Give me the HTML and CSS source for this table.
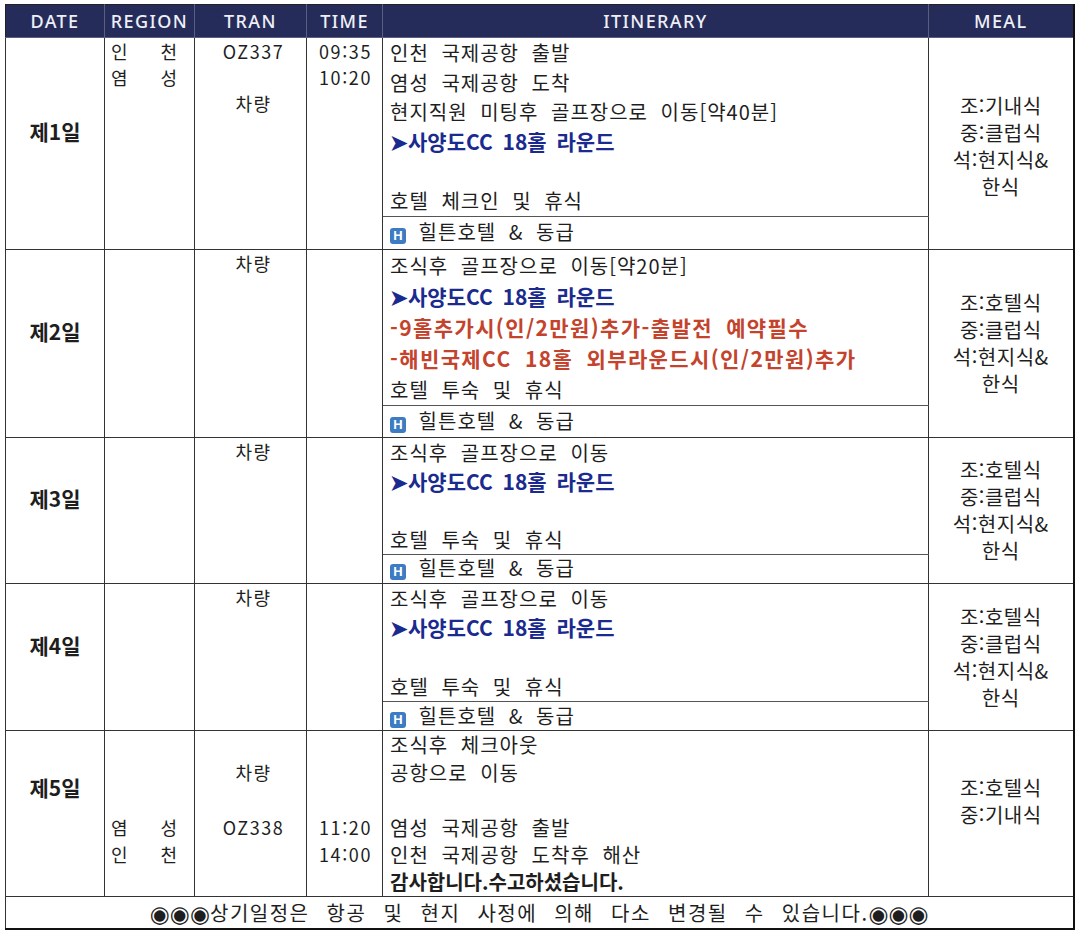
FILE: index.html
```html
<!DOCTYPE html>
<html lang="ko">
<head>
<meta charset="utf-8">
<title>일정표</title>
<link rel="stylesheet" href="styles.css">
</head>
<body>
<table class="sched">
  <colgroup>
    <col class="c-date"><col class="c-region"><col class="c-tran"><col class="c-time"><col class="c-itin"><col class="c-meal">
  </colgroup>
  <thead>
    <tr><th>DATE</th><th>REGION</th><th>TRAN</th><th>TIME</th><th>ITINERARY</th><th>MEAL</th></tr>
  </thead>
  <tbody>
    <tr>
      <td class="day" rowspan="2">제1일</td>
      <td class="region l26" rowspan="2"><div class="pair"><span>인</span><span>천</span></div><div class="pair"><span>염</span><span>성</span></div></td>
      <td class="tran l26" rowspan="2">OZ337<br><br>차량</td>
      <td class="time l26" rowspan="2">09:35<br>10:20</td>
      <td class="itin d1">
        <div>인천 국제공항 출발</div>
        <div>염성 국제공항 도착</div>
        <div>현지직원 미팅후 골프장으로 이동[약40분]</div>
        <div class="blue">➤사양도CC 18홀 라운드</div>
        <div>&nbsp;</div>
        <div>호텔 체크인 및 휴식</div>
      </td>
      <td class="meal m1" rowspan="2">조:기내식<br>중:클럽식<br>석:현지식&amp;<br>한식</td>
    </tr>
    <tr><td class="hotel h1"><span class="hico">H</span> 힐튼호텔 &amp; 동급</td></tr>

    <tr>
      <td class="day" rowspan="2">제2일</td>
      <td class="region" rowspan="2"></td>
      <td class="tran l26" rowspan="2">차량</td>
      <td class="time" rowspan="2"></td>
      <td class="itin d2">
        <div>조식후 골프장으로 이동[약20분]</div>
        <div class="blue">➤사양도CC 18홀 라운드</div>
        <div class="red">-9홀추가시(인/2만원)추가-출발전 예약필수</div>
        <div class="red">-해빈국제CC 18홀 외부라운드시(인/2만원)추가</div>
        <div>호텔 투숙 및 휴식</div>
      </td>
      <td class="meal" rowspan="2">조:호텔식<br>중:클럽식<br>석:현지식&amp;<br>한식</td>
    </tr>
    <tr><td class="hotel h2"><span class="hico">H</span> 힐튼호텔 &amp; 동급</td></tr>

    <tr>
      <td class="day" rowspan="2">제3일</td>
      <td class="region" rowspan="2"></td>
      <td class="tran l26" rowspan="2">차량</td>
      <td class="time" rowspan="2"></td>
      <td class="itin d3">
        <div>조식후 골프장으로 이동</div>
        <div class="blue">➤사양도CC 18홀 라운드</div>
        <div>&nbsp;</div>
        <div>호텔 투숙 및 휴식</div>
      </td>
      <td class="meal" rowspan="2">조:호텔식<br>중:클럽식<br>석:현지식&amp;<br>한식</td>
    </tr>
    <tr><td class="hotel h3"><span class="hico">H</span> 힐튼호텔 &amp; 동급</td></tr>

    <tr>
      <td class="day" rowspan="2">제4일</td>
      <td class="region" rowspan="2"></td>
      <td class="tran l26" rowspan="2">차량</td>
      <td class="time" rowspan="2"></td>
      <td class="itin d4">
        <div>조식후 골프장으로 이동</div>
        <div class="blue">➤사양도CC 18홀 라운드</div>
        <div>&nbsp;</div>
        <div>호텔 투숙 및 휴식</div>
      </td>
      <td class="meal" rowspan="2">조:호텔식<br>중:클럽식<br>석:현지식&amp;<br>한식</td>
    </tr>
    <tr><td class="hotel h3"><span class="hico">H</span> 힐튼호텔 &amp; 동급</td></tr>

    <tr>
      <td class="day day5">제5일</td>
      <td class="region l275"><br><br><br><div class="pair"><span>염</span><span>성</span></div><div class="pair"><span>인</span><span>천</span></div></td>
      <td class="tran l275"><br>차량<br><br>OZ338</td>
      <td class="time l275"><br><br><br>11:20<br>14:00</td>
      <td class="itin d5">
        <div>조식후 체크아웃</div>
        <div>공항으로 이동</div>
        <div>&nbsp;</div>
        <div>염성 국제공항 출발</div>
        <div>인천 국제공항 도착후 해산</div>
        <div class="bold">감사합니다.수고하셨습니다.</div>
      </td>
      <td class="meal m5">조:호텔식<br>중:기내식</td>
    </tr>
    <tr>
      <td class="note" colspan="6"><span class="dots">◉◉◉</span>상기일정은 항공 및 현지 사정에 의해 다소 변경될 수 있습니다.<span class="dots">◉◉◉</span></td>
    </tr>
  </tbody>
</table>
</body>
</html>
```
FILE: styles.css
```css
html, body {
  background: #ffffff;
}
body {
  margin: 4px 0 0 5px;
  font-family: "Noto Sans CJK KR", "Noto Sans", sans-serif;
  color: #1e1e1e;
}
.sched {
  border-collapse: collapse;
  table-layout: fixed;
  width: 1068px;
  font-size: 20px;
  border-right: 2px solid #111;
  border-bottom: 2px solid #111;
}
.c-date { width: 99px; }
.c-region { width: 90px; }
.c-tran { width: 112px; }
.c-time { width: 76px; }
.c-itin { width: 546px; }
.c-meal { width: 145px; }

.sched th {
  background: #262c5a;
  color: #eef0f6;
  font-family: "Noto Sans", "Liberation Sans", sans-serif;
  font-weight: 500;
  font-size: 18px;
  height: 32px;
  padding: 0;
  border: 1px solid #5a5f80;
  border-top-color: #222;
  letter-spacing: 1.4px;
}
.sched th:first-child { border-left-color: #222; }
.sched th:last-child { border-right: 2px solid #111; }

.sched td {
  border: 1px solid #333333;
  padding: 0;
  vertical-align: top;
  text-align: center;
  letter-spacing: 1px;
  word-spacing: 6px;
}
.sched td.day {
  vertical-align: middle;
  font-weight: 700;
  font-size: 21px;
  padding-bottom: 24px;
  letter-spacing: 0;
}
.sched td.day5 {
  padding-bottom: 54px;
}
.l26 { line-height: 26px; font-size: 18px; }
.l275 { line-height: 27.5px; font-size: 18px; }
.sched td.region { padding-left: 6px; text-align: left; }
.pair {
  display: flex;
  gap: 32px;
}
.sched td.tran { padding-left: 6px; letter-spacing: 1.5px; }
.sched td.time { text-align: center; letter-spacing: 1.6px; padding-left: 2px; }

.sched td.itin {
  text-align: left;
  padding-left: 7px;
  border-bottom: 1px solid #555;
}
.d1 div { line-height: 29.6px; }
.d2 div { line-height: 31px; }
.d3 div { line-height: 29px; }
.d4 div { line-height: 29.4px; }
.d5 div { line-height: 27.45px; }
.sched td.d5 { border-bottom: 1px solid #333; }

.blue {
  color: #1b2a8e;
  font-weight: 700;
  font-size: 21px;
  letter-spacing: 0;
  word-spacing: 4px;
}
.red {
  color: #c4432d;
  font-weight: 700;
  font-size: 21px;
  letter-spacing: 1.4px;
  word-spacing: 6px;
}
.bold { font-weight: 700; letter-spacing: 0; }

.sched td.hotel {
  text-align: left;
  padding-left: 7px;
  vertical-align: middle;
  line-height: 22px;
}
.h1 { height: 32px; }
.h2 { height: 31px; }
.h3 { height: 28px; }
.hico {
  display: inline-block;
  width: 16px;
  height: 16px;
  background: #3d7cc2;
  color: #ffffff;
  border-radius: 3px;
  font-family: "Liberation Sans", "Noto Sans", sans-serif;
  font-weight: 700;
  font-size: 13px;
  line-height: 16px;
  text-align: center;
  vertical-align: 0;
  letter-spacing: 0;
  word-spacing: 0;
}

.sched td.meal {
  vertical-align: middle;
  line-height: 27px;
  letter-spacing: 0.5px;
}
.sched td.m1 { padding-top: 6px; }
.sched td.m5 { padding-bottom: 26px; }

.sched td.note {
  height: 31px;
  vertical-align: middle;
  letter-spacing: 1.5px;
  word-spacing: 10px;
}
.dots {
  font-family: "DejaVu Sans", sans-serif;
  font-size: 23px;
  line-height: 1;
  letter-spacing: 0;
  vertical-align: -1px;
}
```
